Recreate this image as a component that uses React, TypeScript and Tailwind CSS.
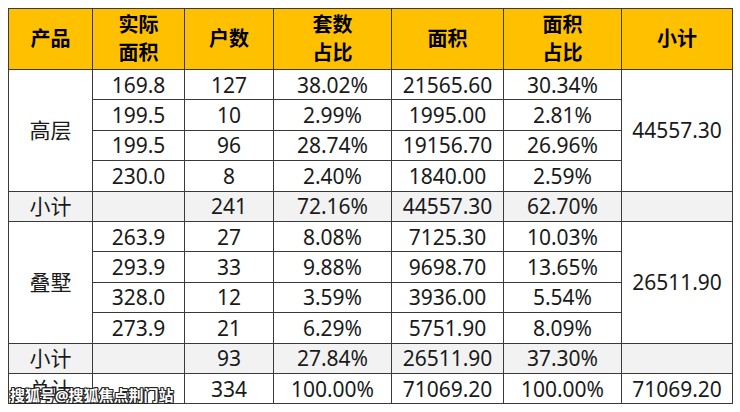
import React from "react";

type Row = { a: string; b: string; c: string; d: string; e: string };

const tower: Row[] = [
  { a: "169.8", b: "127", c: "38.02%", d: "21565.60", e: "30.34%" },
  { a: "199.5", b: "10", c: "2.99%", d: "1995.00", e: "2.81%" },
  { a: "199.5", b: "96", c: "28.74%", d: "19156.70", e: "26.96%" },
  { a: "230.0", b: "8", c: "2.40%", d: "1840.00", e: "2.59%" },
];

const villa: Row[] = [
  { a: "263.9", b: "27", c: "8.08%", d: "7125.30", e: "10.03%" },
  { a: "293.9", b: "33", c: "9.88%", d: "9698.70", e: "13.65%" },
  { a: "328.0", b: "12", c: "3.59%", d: "3936.00", e: "5.54%" },
  { a: "273.9", b: "21", c: "6.29%", d: "5751.90", e: "8.09%" },
];

const td = "border border-[#3a3a3a] text-center h-[30.4px] p-0 leading-[26px]";
const th = "border border-[#3a3a3a] text-center font-bold text-[20px] leading-[28px] p-0";

function Group({ name, rows, total }: { name: string; rows: Row[]; total: string }) {
  return (
    <>
      {rows.map((r, i) => (
        <tr key={i}>
          {i === 0 && (
            <td rowSpan={4} className={td}>
              {name}
            </td>
          )}
          <td className={td}>{r.a}</td>
          <td className={td}>{r.b}</td>
          <td className={td}>{r.c}</td>
          <td className={td}>{r.d}</td>
          <td className={td}>{r.e}</td>
          {i === 0 && (
            <td rowSpan={4} className={td}>
              {total}
            </td>
          )}
        </tr>
      ))}
    </>
  );
}

function Subtotal({ b, c, d, e }: { b: string; c: string; d: string; e: string }) {
  return (
    <tr className="bg-[#f2f2f2]">
      <td className={td}>小计</td>
      <td className={td}></td>
      <td className={td}>{b}</td>
      <td className={td}>{c}</td>
      <td className={td}>{d}</td>
      <td className={td}>{e}</td>
      <td className={td}></td>
    </tr>
  );
}

export default function App() {
  return (
    <div className="relative w-[740px] h-[412px] bg-white pt-[8px] pl-[8px] font-['Noto_Sans','Noto_Sans_CJK_SC',sans-serif] text-[21px] text-[#1a1a1a]">
      <table className="border-collapse table-fixed w-[724px]">
        <colgroup>
          <col className="w-[84px]" />
          <col className="w-[92px]" />
          <col className="w-[89px]" />
          <col className="w-[118px]" />
          <col className="w-[112px]" />
          <col className="w-[118px]" />
          <col className="w-[111px]" />
        </colgroup>
        <thead>
          <tr className="bg-[#ffc000] text-black h-[61px]">
            <th className={th}>产品</th>
            <th className={th}>
              实际
              <br />
              面积
            </th>
            <th className={th}>户数</th>
            <th className={th}>
              套数
              <br />
              占比
            </th>
            <th className={th}>面积</th>
            <th className={th}>
              面积
              <br />
              占比
            </th>
            <th className={th}>小计</th>
          </tr>
        </thead>
        <tbody>
          <Group name="高层" rows={tower} total="44557.30" />
          <Subtotal b="241" c="72.16%" d="44557.30" e="62.70%" />
          <Group name="叠墅" rows={villa} total="26511.90" />
          <Subtotal b="93" c="27.84%" d="26511.90" e="37.30%" />
          <tr>
            <td className={td}>总计</td>
            <td className={td}></td>
            <td className={td}>334</td>
            <td className={td}>100.00%</td>
            <td className={td}>71069.20</td>
            <td className={td}>100.00%</td>
            <td className={td}>71069.20</td>
          </tr>
        </tbody>
      </table>
      <div className="absolute left-[10px] top-[385px] text-[15px] font-bold leading-[20px] text-white [text-shadow:1px_0_0_#222,-1px_0_0_#222,0_1px_0_#222,0_-1px_0_#222,1px_1px_0_#222,-1px_-1px_0_#222,1px_-1px_0_#222,-1px_1px_0_#222]">
        搜狐号@搜狐焦点荆门站
      </div>
    </div>
  );
}
